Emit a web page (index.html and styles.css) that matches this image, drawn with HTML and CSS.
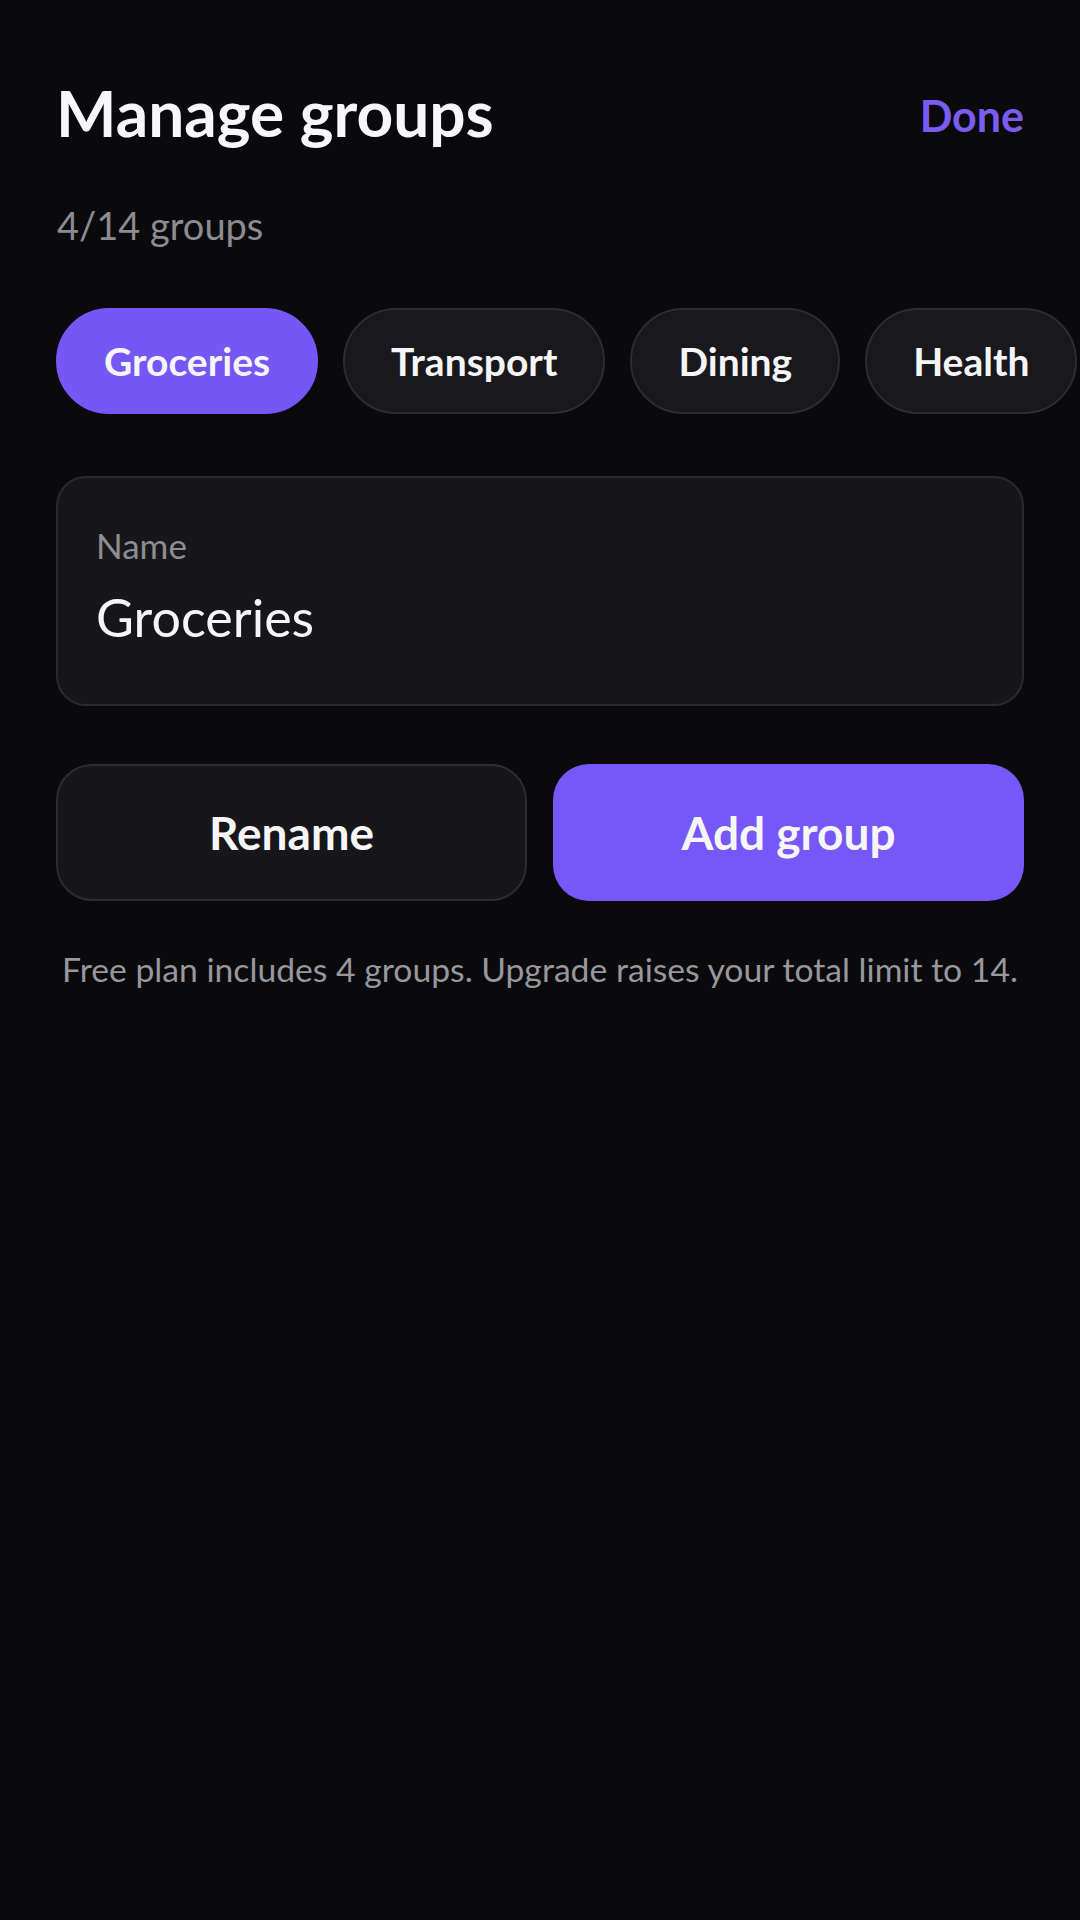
FILE: index.html
```html
<!DOCTYPE html>
<html lang="en">
<head>
<meta charset="utf-8">
<title>Manage groups</title>
<link rel="stylesheet" href="styles.css">
</head>
<body>
<main class="page">
  <header class="header">
    <h1 class="title">Manage groups</h1>
    <button class="done">Done</button>
  </header>
  <p class="count">4/14 groups</p>
  <div class="chips">
    <button class="chip chip-active">Groceries</button>
    <button class="chip">Transport</button>
    <button class="chip">Dining</button>
    <button class="chip">Health</button>
  </div>
  <div class="field">
    <span class="field-label">Name</span>
    <span class="field-value">Groceries</span>
  </div>
  <div class="actions">
    <button class="btn btn-secondary">Rename</button>
    <button class="btn btn-primary">Add group</button>
  </div>
  <p class="note">Free plan includes 4 groups. Upgrade raises your total limit to 14.</p>
</main>
</body>
</html>
```

FILE: styles.css
```css
* { box-sizing: border-box; }
html, body {
  margin: 0;
  padding: 0;
  background: #0a0a0c;
  width: 1080px;
  height: 1920px;
  overflow: hidden;
  font-family: "Lato", "Noto Sans", sans-serif;
  color: #f4f4f6;
}
button {
  font-family: inherit;
  border: none;
  background: none;
  color: inherit;
  padding: 0;
  margin: 0;
}
.page {
  padding: 77px 56px 0 56px;
  display: flex;
  flex-direction: column;
}
.header {
  display: flex;
  justify-content: space-between;
  align-items: center;
  height: 72px;
}
.title {
  margin: 0;
  font-size: 64px;
  line-height: 72px;
  font-weight: 700;
  color: #f7f7f9;
  letter-spacing: 0;
}
.done {
  font-size: 43px;
  line-height: 72px;
  font-weight: 700;
  color: #7a5cf0;
  margin-top: 6px;
}
.count {
  margin: 54px 0 0 1px;
  font-size: 38px;
  line-height: 44px;
  color: #8c8c92;
}
.chips {
  margin: 61px -56px 0 0;
  display: flex;
  gap: 25px;
  overflow: hidden;
  white-space: nowrap;
}
.chip {
  flex-shrink: 0;
  height: 106px;
  padding: 0 46px;
  border-radius: 53px;
  background: #19191d;
  border: 2px solid #2c2c31;
  font-size: 39px;
  font-weight: 700;
  color: #f5f5f7;
}
.chip-active {
  background: #7557f6;
  border-color: #7557f6;
}
.field {
  margin-top: 62px;
  height: 230px;
  border-radius: 30px;
  background: #17171b;
  border: 2px solid #2a2a2f;
  padding: 46px 38px 0 38px;
  display: flex;
  flex-direction: column;
}
.field-label {
  font-size: 35px;
  line-height: 42px;
  color: #8d8d93;
}
.field-value {
  margin-top: 21px;
  font-size: 52px;
  line-height: 60px;
  color: #f6f6f8;
}
.actions {
  margin-top: 58px;
  display: grid;
  grid-template-columns: 1fr 1fr;
  gap: 26px;
}
.btn {
  height: 137px;
  border-radius: 36px;
  font-size: 46px;
  font-weight: 700;
  color: #f6f6f8;
}
.btn-secondary {
  background: #17171b;
  border: 2px solid #2c2c31;
}
.btn-primary {
  background: #7657f7;
}
.note {
  margin: 48px 0 0 0;
  text-align: center;
  font-size: 33.7px;
  line-height: 40px;
  color: #97979d;
}
```
